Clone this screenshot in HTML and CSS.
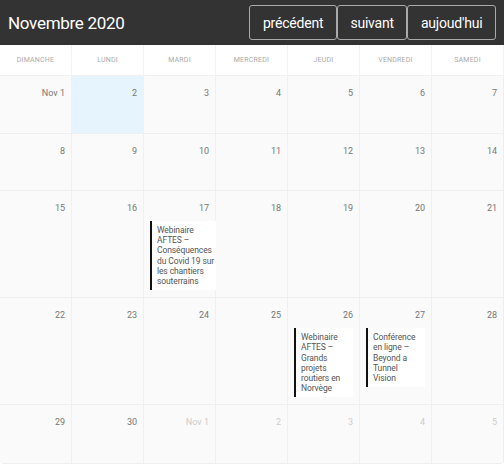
FILE: index.html
```html
<!DOCTYPE html>
<html lang="fr">
<head>
<meta charset="utf-8">
<title>Calendrier</title>
<link rel="stylesheet" href="styles.css">
</head>
<body>
<div class="toolbar">
  <h1 class="title">Novembre 2020</h1>
  <div class="nav">
    <button class="btn">précédent</button>
    <button class="btn">suivant</button>
    <button class="btn">aujoud'hui</button>
  </div>
</div>
<div class="cal">
  <div class="week dow">
    <div class="dname">Dimanche</div>
    <div class="dname">Lundi</div>
    <div class="dname">Mardi</div>
    <div class="dname">Mercredi</div>
    <div class="dname">Jeudi</div>
    <div class="dname">Vendredi</div>
    <div class="dname">Samedi</div>
  </div>
  <div class="week">
    <div class="cell"><span class="num">Nov 1</span></div>
    <div class="cell today"><span class="num">2</span></div>
    <div class="cell"><span class="num">3</span></div>
    <div class="cell"><span class="num">4</span></div>
    <div class="cell"><span class="num">5</span></div>
    <div class="cell"><span class="num">6</span></div>
    <div class="cell"><span class="num">7</span></div>
  </div>
  <div class="week">
    <div class="cell"><span class="num">8</span></div>
    <div class="cell"><span class="num">9</span></div>
    <div class="cell"><span class="num">10</span></div>
    <div class="cell"><span class="num">11</span></div>
    <div class="cell"><span class="num">12</span></div>
    <div class="cell"><span class="num">13</span></div>
    <div class="cell"><span class="num">14</span></div>
  </div>
  <div class="week">
    <div class="cell"><span class="num">15</span></div>
    <div class="cell"><span class="num">16</span></div>
    <div class="cell"><span class="num">17</span>
      <div class="event">Webinaire<br>AFTES –<br>Conséquences<br>du Covid 19 sur<br>les chantiers<br>souterrains</div>
    </div>
    <div class="cell"><span class="num">18</span></div>
    <div class="cell"><span class="num">19</span></div>
    <div class="cell"><span class="num">20</span></div>
    <div class="cell"><span class="num">21</span></div>
  </div>
  <div class="week">
    <div class="cell"><span class="num">22</span></div>
    <div class="cell"><span class="num">23</span></div>
    <div class="cell"><span class="num">24</span></div>
    <div class="cell"><span class="num">25</span></div>
    <div class="cell"><span class="num">26</span>
      <div class="event">Webinaire<br>AFTES –<br>Grands<br>projets<br>routiers en<br>Norvège</div>
    </div>
    <div class="cell"><span class="num">27</span>
      <div class="event">Conférence<br>en ligne –<br>Beyond a<br>Tunnel<br>Vision</div>
    </div>
    <div class="cell"><span class="num">28</span></div>
  </div>
  <div class="week last">
    <div class="cell"><span class="num">29</span></div>
    <div class="cell"><span class="num">30</span></div>
    <div class="cell other"><span class="num">Nov 1</span></div>
    <div class="cell other"><span class="num">2</span></div>
    <div class="cell other"><span class="num">3</span></div>
    <div class="cell other"><span class="num">4</span></div>
    <div class="cell other"><span class="num">5</span></div>
  </div>
</div>
</body>
</html>
```
FILE: styles.css
```css
* { box-sizing: border-box; }
body {
  margin: 0;
  font-family: Roboto, "Liberation Sans", sans-serif;
  background: #fff;
}
.toolbar {
  display: flex;
  justify-content: space-between;
  align-items: center;
  height: 45px;
  padding: 0 8px;
  background: #333;
}
.title {
  margin: 0;
  color: #fff;
  font-size: 17px;
  font-weight: 400;
  letter-spacing: -0.3px;
}
.nav { display: flex; }
.btn {
  height: 35px;
  padding: 0 12.5px;
  background: #333;
  color: #fff;
  border: 1px solid #aaa;
  border-radius: 3px;
  font-family: inherit;
  font-size: 14px;
  letter-spacing: -0.2px;
}
.cal {
  border-bottom: 1px solid #eee;
  border-radius: 0 0 4px 4px;
}
.week {
  display: grid;
  grid-template-columns: repeat(7, minmax(0, 1fr));
}
.dow { height: 31px; background: #fff; }
.dname {
  display: flex;
  align-items: center;
  justify-content: center;
  text-transform: uppercase;
  font-size: 7px;
  color: #aaa;
  letter-spacing: 0.2px;
  border-right: 1px solid #f4f4f4;
  border-bottom: 1px solid #f0f0f0;
}
.cell {
  min-height: 57.5px;
  background: #fafafa;
  border-right: 1px solid #f0f0f0;
  border-bottom: 1px solid #efefef;
  padding: 10px 6px 7px;
  display: flex;
  flex-direction: column;
  align-items: flex-start;
}
.week.last .cell { border-bottom: none; }
.cell:last-child { border-right: 1px solid #eee; }
.today { background: #e6f5fd; }
.num {
  align-self: stretch;
  text-align: right;
  font-size: 9px;
  line-height: 14px;
  color: #777;
}
.other .num { color: #ccc; }
.event {
  margin-top: 6px;
  width: 100%;
  min-width: min-content;
  flex-shrink: 0;
  white-space: nowrap;
  background: #fff;
  border-left: 2px solid #111;
  padding: 4px 2px 4px 5px;
  font-size: 8.5px;
  line-height: 10.2px;
  letter-spacing: -0.1px;
  color: #555;
}
```
